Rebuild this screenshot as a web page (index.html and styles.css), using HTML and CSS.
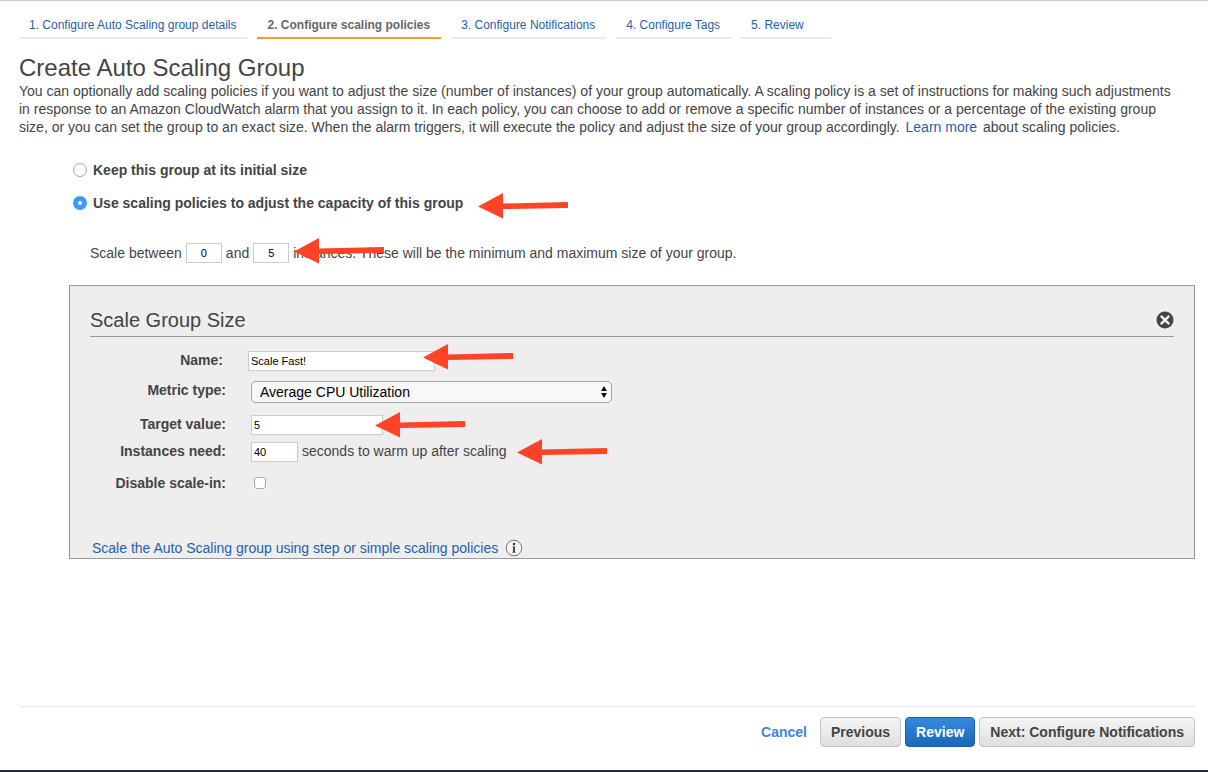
FILE: index.html
```html
<!DOCTYPE html>
<html lang="en">
<head>
<meta charset="utf-8">
<title>Create Auto Scaling Group</title>
<link rel="stylesheet" href="styles.css">
</head>
<body>
<svg class="sprite" aria-hidden="true">
  <symbol id="arrow" viewBox="0 0 90 26">
    <path d="M0 13.500L25 0V10.500L90 9V15L25 16V25.500Z" fill="#ff4326"/>
  </symbol>
</svg>
<div class="page">
  <nav class="steps">
    <a class="step" href="#">1. Configure Auto Scaling group details</a>
    <a class="step step-current" href="#" aria-current="step">2. Configure scaling policies</a>
    <a class="step" href="#">3. Configure Notifications</a>
    <a class="step" href="#">4. Configure Tags</a>
    <a class="step step-last" href="#">5. Review</a>
  </nav>

  <main class="content">
    <h1 class="title">Create Auto Scaling Group</h1>
    <p class="intro">You can optionally add scaling policies if you want to adjust the size (number of instances) of your group automatically. A scaling policy is a set of instructions for making such adjustments<br>in response to an Amazon CloudWatch alarm that you assign to it. In each policy, you can choose to add or remove a specific number of instances or a percentage of the existing group<br>size, or you can set the group to an exact size. When the alarm triggers, it will execute the policy and adjust the size of your group accordingly. <a class="link more" href="#">Learn more</a> about scaling policies.</p>

    <form class="options" id="policy-form">
      <div class="choice">
        <input class="radio" type="radio" name="mode" id="mode-keep">
        <label for="mode-keep">Keep this group at its initial size</label>
      </div>
      <div class="choice">
        <input class="radio" type="radio" name="mode" id="mode-scale" checked>
        <label for="mode-scale">Use scaling policies to adjust the capacity of this group</label>
        <svg class="arrow arrow-mode" aria-hidden="true"><use href="#arrow"/></svg>
      </div>

      <div class="range">
        <label for="min">Scale between</label>
        <input class="field field-count" id="min" type="text" value="0">
        <label for="max">and</label>
        <input class="field field-count" id="max" type="text" value="5">
        <span>instances. These will be the minimum and maximum size of your group.</span>
        <svg class="arrow arrow-range" aria-hidden="true"><use href="#arrow"/></svg>
      </div>

      <section class="panel">
        <header class="panel-head">
          <h2 class="panel-title">Scale Group Size</h2>
          <button class="close" type="button" aria-label="Remove policy">
            <svg viewBox="0 0 18 18" width="18" height="18" aria-hidden="true"><circle cx="9" cy="9" r="8.500" fill="#444"/><path d="M5.500 5.500L12.500 12.500M12.500 5.500L5.500 12.500" stroke="#fff" stroke-width="2.400" stroke-linecap="round"/></svg>
          </button>
        </header>
        <div class="row row-name">
          <label class="label" for="name">Name:</label>
          <input class="field field-name" id="name" type="text" value="Scale Fast!">
          <svg class="arrow arrow-name" aria-hidden="true"><use href="#arrow"/></svg>
        </div>
        <div class="row row-metric">
          <label class="label" for="metric">Metric type:</label>
          <div class="select-box">
            <select class="select" id="metric"><option>Average CPU Utilization</option></select>
            <svg class="select-mark" viewBox="0 0 8 14" aria-hidden="true"><path d="M4 1L7 6H1ZM4 13L1 8H7Z" fill="#111"/></svg>
          </div>
        </div>
        <div class="row row-target">
          <label class="label" for="target">Target value:</label>
          <input class="field field-target" id="target" type="text" value="5">
          <svg class="arrow arrow-target" aria-hidden="true"><use href="#arrow"/></svg>
        </div>
        <div class="row row-warm">
          <label class="label" for="warm">Instances need:</label>
          <input class="field field-warm" id="warm" type="text" value="40">
          <span class="unit">seconds to warm up after scaling</span>
          <svg class="arrow arrow-warm" aria-hidden="true"><use href="#arrow"/></svg>
        </div>
        <div class="row row-disable">
          <label class="label" for="disable">Disable scale-in:</label>
          <input class="check" id="disable" type="checkbox">
        </div>
        <div class="alt">
          <a class="link" href="#">Scale the Auto Scaling group using step or simple scaling policies</a>
          <svg class="info" viewBox="0 0 18 18" aria-hidden="true"><circle cx="9" cy="9" r="7.800" fill="#f4f4f4" stroke="#777"/><path d="M9 7.500V13.500" fill="none" stroke="#333" stroke-width="1.800"/><path d="M7.500 7.900H9M7.300 13.300H10.700" stroke="#555" stroke-width="0.800"/><circle cx="9" cy="5" r="1.200" fill="#333"/></svg>
        </div>
      </section>
    </form>
  </main>

  <footer class="actions">
    <a class="cancel" href="#">Cancel</a>
    <button class="btn" type="button">Previous</button>
    <button class="btn btn-primary" type="button">Review</button>
    <button class="btn" type="submit" form="policy-form">Next: Configure Notifications</button>
  </footer>
</div>
</body>
</html>
```

FILE: styles.css
```css
* { box-sizing: border-box; }
body {
  margin: 0;
  background: #fff;
  color: #444;
  font: 14px/18px "Liberation Sans", Arial, sans-serif;
}
.sprite { position: absolute; width: 0; height: 0; }
.page {
  display: flex;
  flex-direction: column;
  min-height: 100vh;
  padding: 10px 13px 23px 19px;
  border-top: 1px solid #ccc;
  border-bottom: 2px solid #232f3e;
}
.link, .step { color: #1e5fab; text-decoration: none; }

.steps { display: flex; gap: 10px; }
.step {
  padding: 5px 11px 3px 10px;
  border-bottom: 2px solid #eaeaea;
  font-size: 12px;
}
.step-current { color: #666; border-color: #f8992d; font-weight: bold; }
.step-last { min-width: 90px; }

.content { flex: 1; }
.title {
  margin: 15px 0 0;
  font-size: 24px;
  line-height: 28px;
  font-weight: normal;
}
.intro { margin: 0; }
.more { margin: 0 2px; }

.options { margin: 25px 0 0 50px; }
.choice {
  position: relative;
  display: flex;
  align-items: center;
  gap: 6px;
  margin-bottom: 15px;
  padding-left: 4px;
  font-weight: bold;
}
.radio {
  appearance: none;
  width: 14px;
  height: 14px;
  margin: 0;
  border: 1px solid #aaa;
  border-radius: 50%;
  background: #fff;
}
.radio:checked { border: 5px solid #3b99fc; }

.range {
  position: relative;
  display: flex;
  align-items: center;
  gap: 4px;
  margin: 31px 0 22px 21px;
}
.field {
  height: 20px;
  padding: 2px;
  border: 1px solid #ccc;
  background: #fff;
  color: #000;
  font: 11px "Liberation Sans", Arial, sans-serif;
}
.field-count { width: 36px; text-align: center; }
.field-name { width: 187px; }
.field-target { width: 132px; }
.field-warm { width: 47px; }

.panel {
  padding: 22px 20px 1px;
  border: 1px solid #999;
  background: #eee;
}
.panel-head {
  display: flex;
  justify-content: space-between;
  align-items: center;
  padding-bottom: 4px;
  border-bottom: 1px solid #999;
}
.panel-title {
  margin: 0;
  font-size: 20px;
  line-height: 24px;
  font-weight: normal;
}
.close {
  display: flex;
  padding: 0;
  border: 0;
  background: none;
}
.row {
  position: relative;
  display: flex;
  align-items: flex-start;
}
.label {
  width: 136px;
  margin-right: 25px;
  font-weight: bold;
  text-align: right;
}
.row-name { margin-top: 14px; }
.row-name .label { width: 133px; }
.row-metric { margin-top: 10px; }
.row-target { margin-top: 12px; }
.row-warm { margin-top: 7px; }
.row-disable { margin-top: 12px; align-items: center; }
.select-box { position: relative; width: 361px; }
.select {
  display: block;
  appearance: none;
  width: 100%;
  height: 22px;
  padding: 0 20px 0 8px;
  border: 1px solid #a3a3a3;
  border-radius: 5px;
  background: #f8f8f8;
  color: #000;
  font: inherit;
}
.select-mark {
  position: absolute;
  top: 4px;
  right: 4px;
  width: 8px;
  height: 14px;
  pointer-events: none;
}
.unit { margin-left: 4px; }
.check {
  appearance: none;
  width: 12px;
  height: 12px;
  margin: 0 0 0 3px;
  border: 1px solid #aaa;
  border-radius: 3px;
  background: #fff;
}
.alt {
  display: flex;
  align-items: center;
  gap: 7px;
  margin: 47px 0 0 2px;
}
.info { width: 18px; height: 18px; }

.arrow {
  position: absolute;
  width: 90px;
  height: 26px;
  pointer-events: none;
}
.arrow-mode { left: 409px; top: -1px; }
.arrow-range { left: 204px; top: -5px; }
.arrow-name { left: 333px; top: -7px; }
.arrow-target { left: 285px; top: -3px; }
.arrow-warm { left: 427px; top: -3px; }

.actions {
  display: flex;
  justify-content: flex-end;
  align-items: center;
  gap: 4px;
  padding-top: 10px;
  border-top: 1px solid #eaeaea;
}
.cancel {
  margin-right: 9px;
  color: #3a87dd;
  font-weight: bold;
  text-decoration: none;
}
.btn {
  height: 30px;
  padding: 0 10px;
  border: 1px solid #c4c4c4;
  border-radius: 4px;
  background: linear-gradient(#f5f5f5, #dfdfdf);
  color: #444;
  font: bold 14px "Liberation Sans", Arial, sans-serif;
}
.btn-primary {
  border-color: #1c62ae;
  background: linear-gradient(#358ade, #1c67b7);
  color: #fff;
}
```
